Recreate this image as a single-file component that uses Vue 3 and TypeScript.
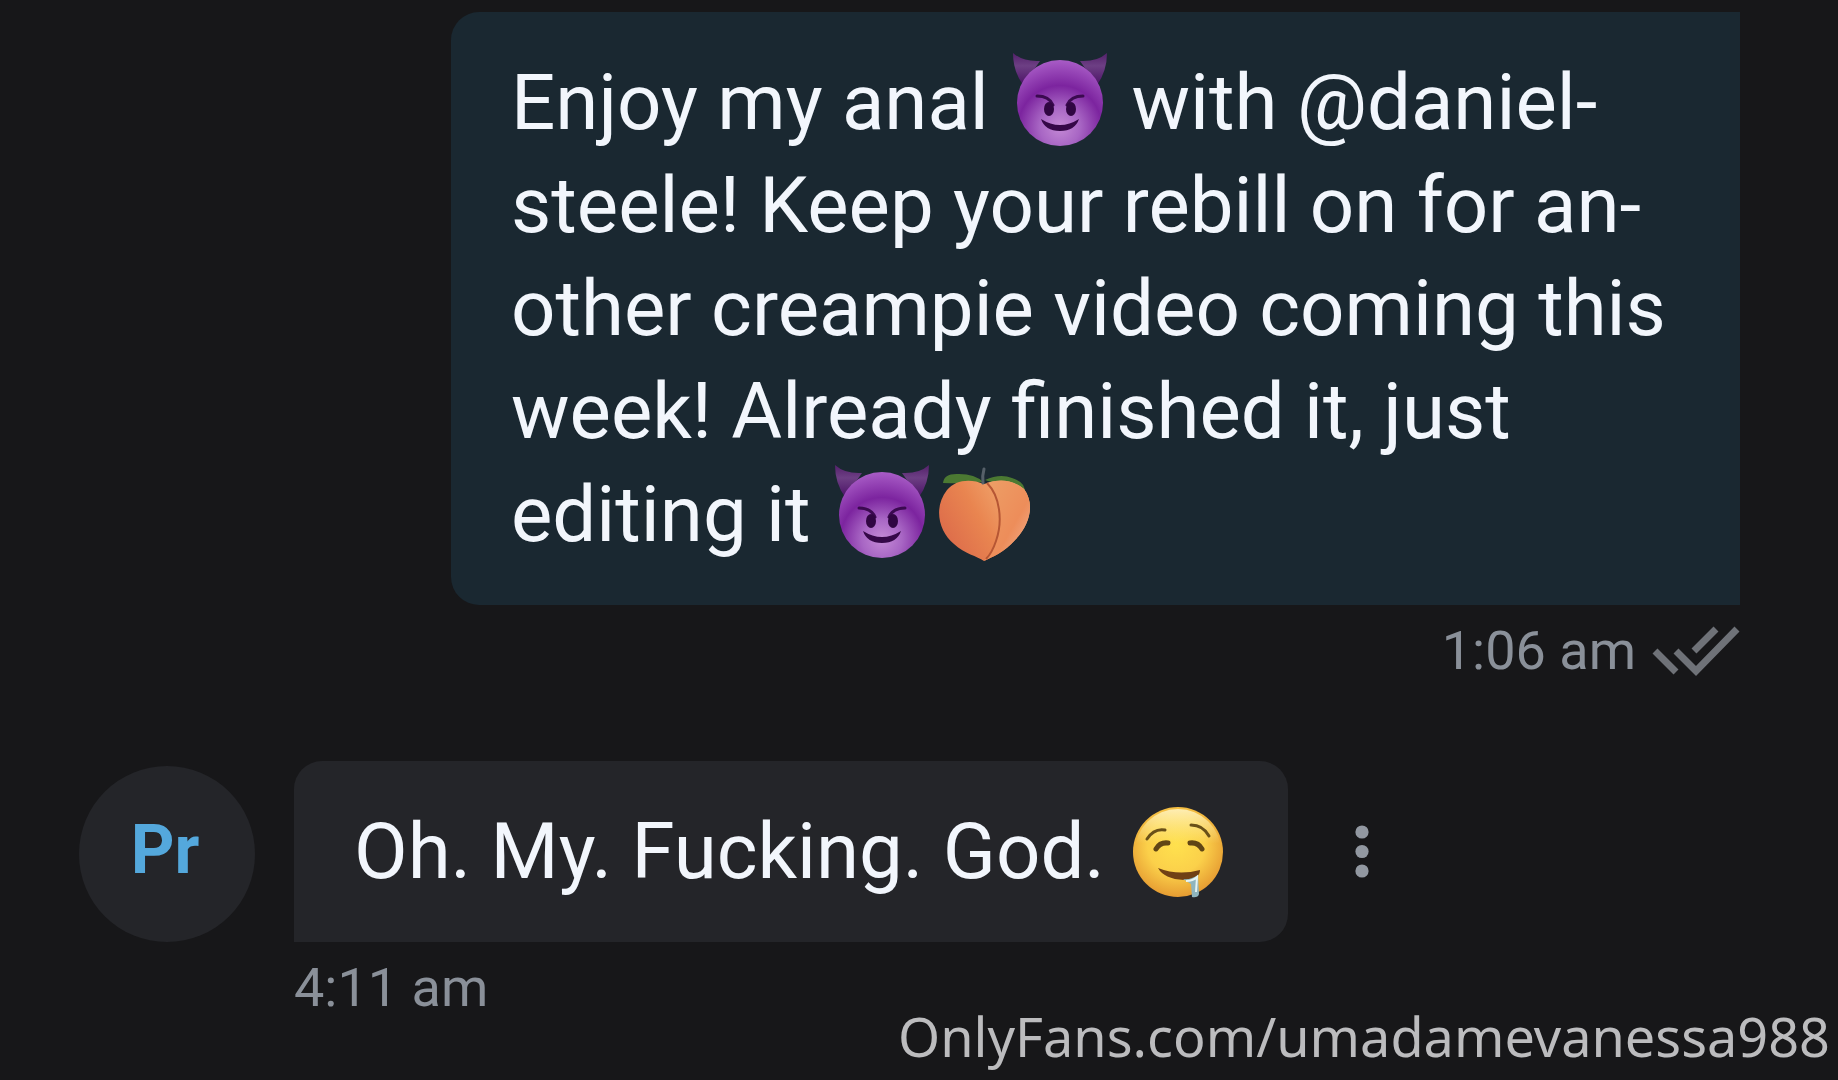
<script setup lang="ts">
type Part = { kind: 'text'; value: string } | { kind: 'devil' | 'peach' | 'drool'; label: string }

const text = (value: string): Part => ({ kind: 'text', value })
const devil: Part = { kind: 'devil', label: 'smiling face with horns' }
const peach: Part = { kind: 'peach', label: 'peach' }
const drool: Part = { kind: 'drool', label: 'drooling face' }

interface Message {
  id: number
  own: boolean
  initials?: string
  time: string
  lines: Part[][]
}

const messages: Message[] = [
  {
    id: 1,
    own: true,
    time: '1:06 am',
    lines: [
      [text('Enjoy my anal '), devil, text(' with @daniel-')],
      [text('steele! Keep your rebill on for an-')],
      [text('other creampie video coming this')],
      [text('week! Already finished it, just')],
      [text('editing it '), devil, peach],
    ],
  },
  {
    id: 2,
    own: false,
    initials: 'Pr',
    time: '4:11 am',
    lines: [[text('Oh. My. Fucking. God. '), drool]],
  },
]
</script>

<template>
  <main class="chat">
    <svg class="defs" width="0" height="0" aria-hidden="true">
      <defs>
        <radialGradient id="devil-face" cx="50%" cy="78%" r="78%">
          <stop offset="0" stop-color="#c48ad6" />
          <stop offset=".3" stop-color="#a866c4" />
          <stop offset=".62" stop-color="#7c249f" />
          <stop offset="1" stop-color="#a85cc6" />
        </radialGradient>
        <linearGradient id="devil-horn" x1="0" y1="0" x2="0" y2="1">
          <stop offset="0" stop-color="#53206a" />
          <stop offset=".4" stop-color="#6d3f84" />
          <stop offset="1" stop-color="#4b1266" />
        </linearGradient>
        <linearGradient id="peach-left" x1="0" y1=".7" x2="1" y2=".2">
          <stop offset="0" stop-color="#dc6a4a" />
          <stop offset=".45" stop-color="#e98550" />
          <stop offset="1" stop-color="#f5b47a" />
        </linearGradient>
        <linearGradient id="peach-right" x1="0" y1="0" x2="1" y2="1">
          <stop offset="0" stop-color="#eda067" />
          <stop offset=".6" stop-color="#ed8d5a" />
          <stop offset="1" stop-color="#f2b598" />
        </linearGradient>
        <radialGradient id="drool-face" cx="48%" cy="42%" r="58%">
          <stop offset="0" stop-color="#ffe14e" />
          <stop offset=".55" stop-color="#fbd04a" />
          <stop offset="1" stop-color="#e69c32" />
        </radialGradient>
        <linearGradient id="drool-shine" x1="0" y1="0" x2="0" y2="1">
          <stop offset="0" stop-color="#fff3c0" stop-opacity=".9" />
          <stop offset=".4" stop-color="#fff3a0" stop-opacity="0" />
        </linearGradient>
      </defs>
    </svg>

    <article v-for="m in messages" :key="m.id" class="message" :class="m.own ? 'own' : 'other'">
      <div class="row">
        <div v-if="m.initials" class="avatar">{{ m.initials }}</div>
        <p class="bubble">
          <span v-for="(line, i) in m.lines" :key="i" class="line">
            <template v-for="(part, j) in line" :key="j">
              <template v-if="part.kind === 'text'">{{ part.value }}</template>
              <svg v-else class="emoji" viewBox="0 0 104 104" role="img" :aria-label="part.label">
                <g v-if="part.kind === 'devil'" transform="translate(0 -2)">
                  <path d="M5 5Q15 14 32 13L15 37Q5 23 5 5ZM99 5Q89 14 72 13L89 37Q99 23 99 5Z" fill="url(#devil-horn)" />
                  <circle cx="52" cy="55" r="43" fill="url(#devil-face)" />
                  <path d="M29 48Q41 48 45 57M75 48Q63 48 59 57" fill="none" stroke="#3b0a50" stroke-width="3" stroke-linecap="round" />
                  <ellipse cx="41" cy="61" rx="5" ry="7" fill="#300642" />
                  <ellipse cx="63" cy="61" rx="5" ry="7" fill="#300642" />
                  <path d="M33 71Q52 83 71 71Q67 83 52 83Q37 83 33 71Z" fill="#350848" />
                </g>
                <g v-else-if="part.kind === 'peach'" transform="translate(-2 0)">
                  <path d="M11 21Q12 11 27 12Q43 12 51 20Q35 22 11 21ZM53 18Q68 11 80 16Q93 20 93 30Q74 25 53 18Z" fill="#4b7932" />
                  <path d="M52 22C38 16 23 18 15 28C1 46 7 70 22 82C33 92 45 94 52 99C60 95 72 91 84 77C98 62 103 42 92 27C80 17 66 17 52 22Z" fill="url(#peach-left)" />
                  <path d="M55 21C68 34 71 59 64 79Q60 91 52 99C60 95 72 91 84 77C98 62 103 42 92 27C80 17 66 17 55 21Z" fill="url(#peach-right)" />
                  <path d="M55 21C68 34 71 59 64 79Q60 91 54 97" fill="none" stroke="#b65634" stroke-width="2" />
                  <path d="M51 21Q50 14 52 7" fill="none" stroke="#566069" stroke-width="3" stroke-linecap="round" />
                </g>
                <g v-else transform="translate(2 1)">
                  <circle cx="52" cy="52" r="45" fill="url(#drool-face)" />
                  <circle cx="52" cy="52" r="43" fill="url(#drool-shine)" />
                  <path d="M21 39Q28 28 39 30M65 25Q77 25 83 36" fill="none" stroke="#695018" stroke-width="3" stroke-linecap="round" />
                  <path d="M30 49Q34 42 42 43M64 43Q72 42 76 49" fill="none" stroke="#604515" stroke-width="5" stroke-linecap="round" />
                  <path d="M32 68Q52 76 74 70Q74 80 58 80Q38 79 32 68Z" fill="#704015" />
                  <path d="M57 79Q65 80 72 75L73 94Q72 98 66 97L65 84Z" fill="#8fb5bd" />
                  <path d="M60 81Q67 81 71 77L70 92" fill="none" stroke="#e7f4f2" stroke-width="2" />
                </g>
              </svg>
            </template>
          </span>
        </p>
        <button v-if="!m.own" class="more" type="button" aria-label="Message options">
          <svg viewBox="0 0 14 54" aria-hidden="true">
            <circle cx="7" cy="7" r="6.6" />
            <circle cx="7" cy="26.5" r="6.6" />
            <circle cx="7" cy="46" r="6.6" />
          </svg>
        </button>
      </div>
      <div class="meta">
        <time>{{ m.time }}</time>
        <svg v-if="m.own" class="ticks" viewBox="0 0 88 50" role="img" aria-label="Read">
          <path d="M3 25L24 46M24 25L44 45L85 3M42 25L64 3" />
        </svg>
      </div>
    </article>

    <a class="watermark" href="#">OnlyFans.com/umadamevanessa988</a>
  </main>
</template>

<style>
body {
  margin: 0;
  background: #171719;
}
</style>

<style scoped>
.chat {
  position: relative;
  box-sizing: border-box;
  min-height: 100vh;
  padding: 12px 98px 48px 79px;
  display: flex;
  flex-direction: column;
  gap: 78px;
  background: #171719;
  font-family: Roboto, "Liberation Sans", sans-serif;
}
.defs {
  position: absolute;
}
.message {
  display: flex;
  flex-direction: column;
  gap: 14px;
}
.row {
  display: flex;
  align-items: flex-end;
}
.own .row,
.own .meta {
  justify-content: flex-end;
}
.own .row {
  padding-left: 372px;
}
.bubble {
  box-sizing: border-box;
  margin: 0;
  padding: 39px 60px;
  border-radius: 28px;
  color: #f2f6fc;
  font-size: 78px;
  line-height: 103px;
}
.own .bubble {
  flex: 1;
  padding-right: 0;
  background: #1a2831;
  border-radius: 28px 0 0 28px;
}
.other .bubble {
  background: #242529;
  border-bottom-left-radius: 0;
}
.line {
  display: block;
  height: 103px;
  white-space: pre;
}
.emoji {
  width: 104px;
  height: 104px;
  margin: -10px 0;
  vertical-align: -15px;
}
.avatar {
  box-sizing: border-box;
  display: flex;
  align-items: center;
  justify-content: center;
  width: 176px;
  height: 176px;
  margin-right: 39px;
  padding: 0 4px 8px 0;
  border-radius: 50%;
  background: #242529;
  color: #54a8dc;
  font-size: 68px;
  font-weight: 700;
  line-height: 80px;
}
.more {
  align-self: center;
  margin-left: 61px;
  padding: 0 6px;
  border: 0;
  background: none;
  cursor: pointer;
}
.more svg {
  display: block;
  width: 14px;
  height: 54px;
  fill: #9298a1;
}
.meta {
  display: flex;
  align-items: center;
  gap: 16px;
  color: #8a9099;
  font-size: 54px;
  line-height: 64px;
}
.other .meta {
  padding-left: 215px;
}
.ticks {
  width: 88px;
  height: 50px;
  fill: none;
  stroke: #6f7278;
  stroke-width: 7;
}
.watermark {
  position: absolute;
  right: 8px;
  bottom: 7px;
  color: #bcbcbe;
  font-family: "Noto Sans", "Open Sans", sans-serif;
  font-size: 54px;
  line-height: 74px;
  text-decoration: none;
}
</style>
